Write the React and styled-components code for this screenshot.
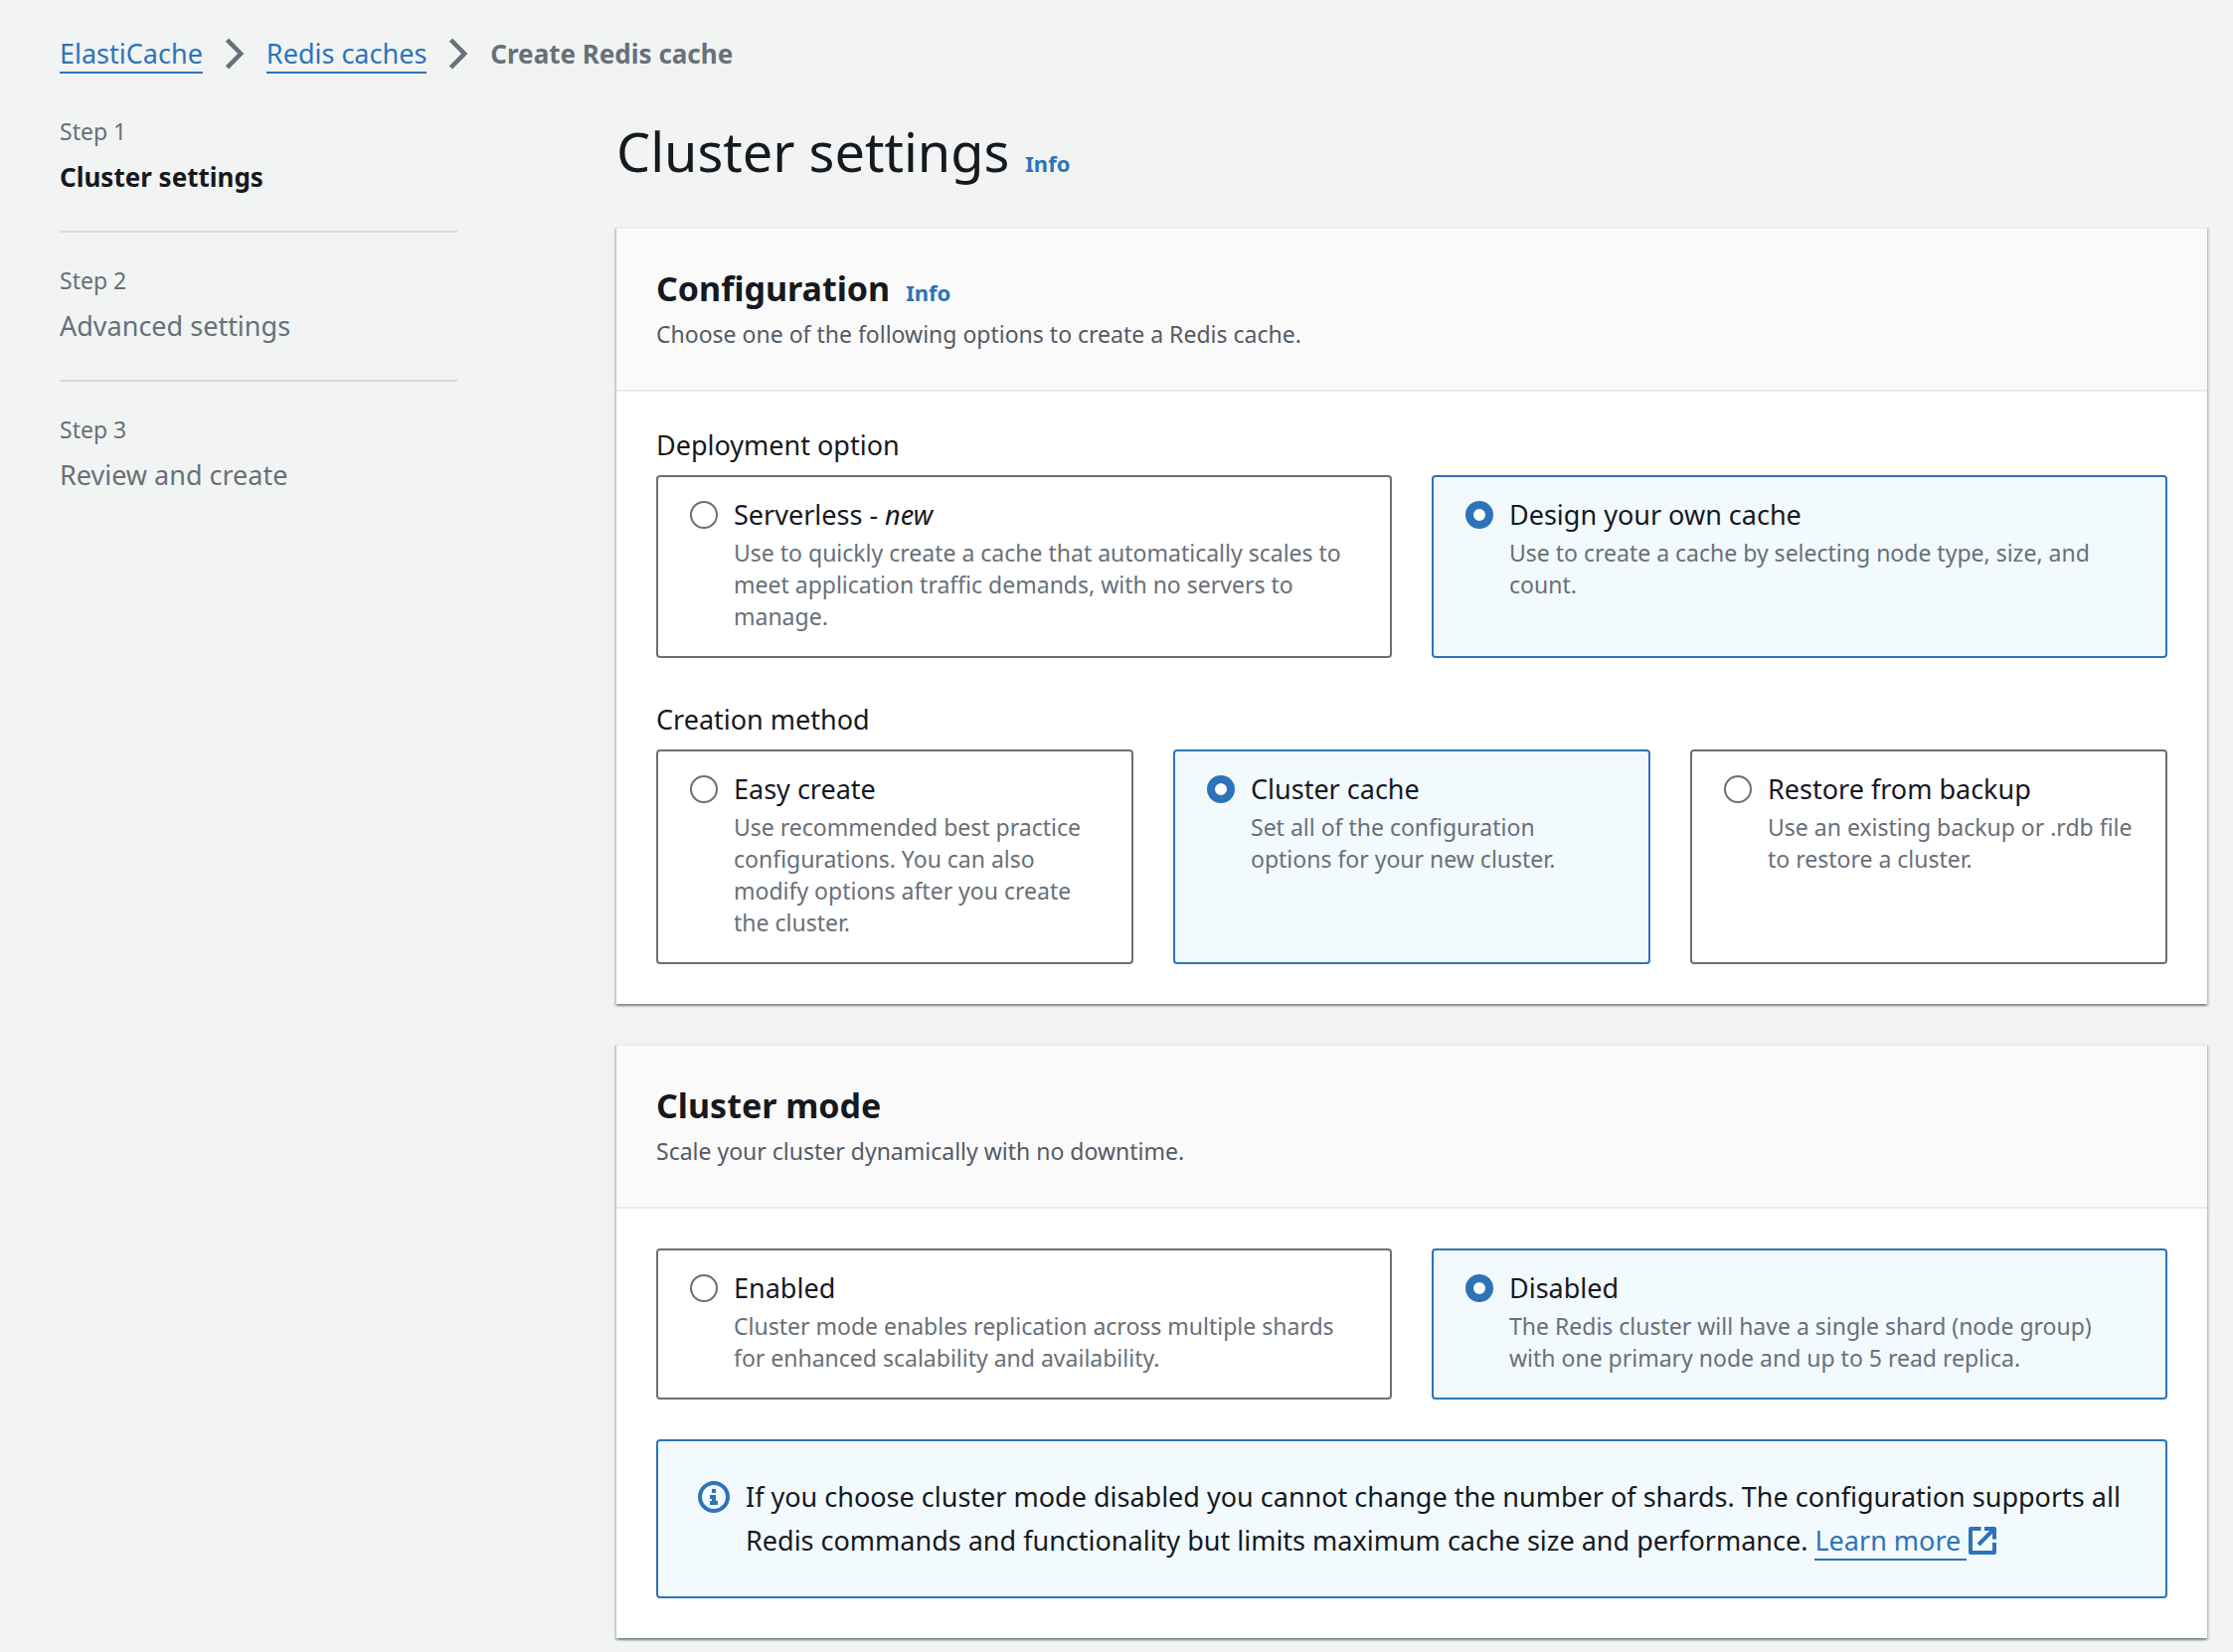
import React, { useState } from 'react';
import styled, { createGlobalStyle, css } from 'styled-components';

const color = {
  page: '#f2f4f3',
  text: '#16191f',
  description: '#545b64',
  muted: '#687078',
  link: '#2e73b8',
  selected: '#f2fafd',
  surface: '#ffffff',
  header: '#fafafa',
  divider: '#d5dbdb',
  line: '#eaeded',
};

const GlobalStyle = createGlobalStyle`
  *, *::before, *::after { box-sizing: border-box; }
  body {
    margin: 0;
    background: ${color.page};
    color: ${color.text};
    font-family: "Noto Sans", "Open Sans", sans-serif;
    font-size: 27px;
    line-height: 44px;
  }
`;

const Page = styled.div`
  display: flex;
  flex-direction: column;
  gap: 40px;
  padding: 32px 26px 14px 60px;
`;

const underlined = css`
  color: ${color.link};
  text-decoration: none;
  border-bottom: 2px solid ${color.link};
`;

const Crumbs = styled.ol`
  display: flex;
  align-items: center;
  gap: 22px;
  margin: 0;
  padding: 0;
  list-style: none;
`;

const Crumb = styled.li`
  display: flex;
  align-items: center;
  gap: 22px;
`;

const CrumbText = styled.span`
  line-height: 44px;
`;

const CrumbLink = styled.a`
  ${underlined}
`;

const CurrentCrumb = styled.strong`
  color: ${color.muted};
  font-size: 26px;
  font-weight: 700;
`;

const Layout = styled.div`
  display: grid;
  grid-template-columns: 400px minmax(0, 1fr);
  column-gap: 160px;
  align-items: start;
`;

const Steps = styled.ol`
  margin: 0;
  padding: 0;
  list-style: none;
`;

const Step = styled.li`
  display: flex;
  flex-direction: column;
  gap: 8px;
  padding-bottom: 32px;

  & + & {
    padding-top: 32px;
    border-top: 2px solid ${color.divider};
  }
`;

const StepNumber = styled.span`
  color: ${color.muted};
  font-size: 23px;
  line-height: 32px;
`;

const StepName = styled.span`
  color: ${p => (p.$current ? color.text : color.muted)};
  font-size: ${p => (p.$current ? 26 : 27)}px;
  font-weight: ${p => (p.$current ? 700 : 400)};
`;

const Main = styled.main`
  display: flex;
  flex-direction: column;
  gap: 40px;
`;

const TitleRow = styled.div`
  display: flex;
  align-items: baseline;
  gap: 16px;
`;

const PageTitle = styled.h1`
  margin: 0;
  font-size: 54px;
  font-weight: 400;
  line-height: 72px;
`;

const InfoLink = styled.a`
  color: ${color.link};
  font-size: 22px;
  font-weight: 700;
  line-height: 32px;
  text-decoration: none;
`;

const Panel = styled.section`
  background: ${color.surface};
  border-top: 2px solid ${color.line};
  box-shadow:
    0 2px 2px 0 rgba(0, 28, 36, 0.3),
    2px 2px 2px 0 rgba(0, 28, 36, 0.15),
    -2px 2px 2px 0 rgba(0, 28, 36, 0.15);
`;

const PanelHeader = styled.header`
  display: flex;
  flex-direction: column;
  gap: 10px;
  padding: 40px;
  background: ${color.header};
  border-bottom: 2px solid ${color.line};
`;

const PanelTitle = styled.h2`
  margin: 0;
  font-size: 34px;
  font-weight: 700;
  line-height: 40px;
`;

const PanelDescription = styled.p`
  margin: 0;
  color: ${color.description};
  font-size: 23px;
  line-height: 32px;
`;

const PanelBody = styled.div`
  display: flex;
  flex-direction: column;
  gap: ${p => p.$gap}px;
  padding: 40px;
`;

const FieldGroup = styled.fieldset`
  min-width: 0;
  margin: 0;
  padding: 0;
  border: 0;
`;

const FieldLabel = styled.legend`
  padding: 0 0 16px;
  line-height: 28px;
`;

const Tiles = styled.div`
  display: grid;
  grid-template-columns: repeat(${p => p.$columns}, minmax(0, 1fr));
  gap: 40px;
`;

const Tile = styled.label`
  display: flex;
  align-items: flex-start;
  gap: 16px;
  padding: 16px 30px 24px 32px;
  border: 2px solid ${p => (p.$selected ? color.link : color.muted)};
  border-radius: 4px;
  background: ${p => (p.$selected ? color.selected : color.surface)};
  cursor: pointer;
`;

const Radio = styled.input`
  appearance: none;
  flex: none;
  width: 28px;
  height: 28px;
  margin: 8px 0 0;
  border: 2px solid ${color.muted};
  border-radius: 50%;
  background: ${color.surface};

  &:checked {
    border: 8px solid ${color.link};
  }
`;

const TileText = styled.span`
  display: flex;
  flex-direction: column;
  min-width: 0;
`;

const TileName = styled.span``;

const TileDescription = styled.span`
  color: ${color.muted};
  font-size: 23px;
  line-height: 32px;
`;

const Alert = styled.div`
  display: flex;
  align-items: flex-start;
  gap: 16px;
  padding: 34px 40px;
  border: 2px solid ${color.link};
  border-radius: 4px;
  background: ${color.selected};
`;

const AlertIcon = styled.svg`
  flex: none;
  width: 32px;
  height: 32px;
  margin-top: 6px;
  color: ${color.link};
`;

const AlertText = styled.p`
  margin: 0;
`;

const ExternalLink = styled.a`
  ${underlined}
  padding-right: 6px;
`;

const ExternalGlyph = styled.svg`
  width: 28px;
  height: 28px;
  margin-left: 2px;
  color: ${color.link};
  vertical-align: -4px;
`;

function Chevron() {
  return (
    <svg width="20" height="32" viewBox="0 0 20 32" aria-hidden="true">
      <path d="M2.5 2.2 16.2 16 2.5 29.8" fill="none" stroke={color.muted} strokeWidth="4.5" />
    </svg>
  );
}

function InfoIcon() {
  return (
    <AlertIcon viewBox="0 0 32 32" aria-hidden="true">
      <circle cx="16" cy="16" r="14" fill="none" stroke="currentColor" strokeWidth="4" />
      <path d="M14 8h4v4h-4zM12 14h6v6h2v4h-8v-4h2v-2h-2z" fill="currentColor" />
    </AlertIcon>
  );
}

function ExternalIcon() {
  return (
    <ExternalGlyph viewBox="0 0 28 28" aria-hidden="true">
      <path
        d="M12.5 2H2v24h24V16M16 2h10v10.5M25.5 2.5 10 18"
        fill="none"
        stroke="currentColor"
        strokeWidth="4"
        strokeLinejoin="round"
      />
    </ExternalGlyph>
  );
}

function TileGroup({ name, label, hint, initial, options }) {
  const [value, setValue] = useState(initial);
  return (
    <FieldGroup aria-label={hint}>
      {label && <FieldLabel>{label}</FieldLabel>}
      <Tiles $columns={options.length}>
        {options.map(option => (
          <Tile key={option.id} htmlFor={option.id} $selected={value === option.id}>
            <Radio
              type="radio"
              id={option.id}
              name={name}
              checked={value === option.id}
              onChange={() => setValue(option.id)}
            />
            <TileText>
              <TileName>{option.title}</TileName>
              <TileDescription>{option.description}</TileDescription>
            </TileText>
          </Tile>
        ))}
      </Tiles>
    </FieldGroup>
  );
}

const steps = ['Cluster settings', 'Advanced settings', 'Review and create'];

const deploymentOptions = [
  {
    id: 'serverless',
    title: <>Serverless - <em>new</em></>,
    description:
      'Use to quickly create a cache that automatically scales to meet application traffic demands, with no servers to manage.',
  },
  {
    id: 'own-cache',
    title: 'Design your own cache',
    description: 'Use to create a cache by selecting node type, size, and count.',
  },
];

const creationMethods = [
  {
    id: 'easy-create',
    title: 'Easy create',
    description:
      'Use recommended best practice configurations. You can also modify options after you create the cluster.',
  },
  {
    id: 'cluster-cache',
    title: 'Cluster cache',
    description: 'Set all of the configuration options for your new cluster.',
  },
  {
    id: 'restore-backup',
    title: 'Restore from backup',
    description: 'Use an existing backup or .rdb file to restore a cluster.',
  },
];

const clusterModes = [
  {
    id: 'mode-enabled',
    title: 'Enabled',
    description:
      'Cluster mode enables replication across multiple shards for enhanced scalability and availability.',
  },
  {
    id: 'mode-disabled',
    title: 'Disabled',
    description:
      'The Redis cluster will have a single shard (node group) with one primary node and up to 5 read replica.',
  },
];

export default function App() {
  return (
    <>
      <GlobalStyle />
      <Page>
        <nav aria-label="Breadcrumbs">
          <Crumbs>
            <Crumb>
              <CrumbText><CrumbLink href="#elasticache">ElastiCache</CrumbLink></CrumbText>
              <Chevron />
            </Crumb>
            <Crumb>
              <CrumbText><CrumbLink href="#redis">Redis caches</CrumbLink></CrumbText>
              <Chevron />
            </Crumb>
            <Crumb>
              <CurrentCrumb aria-current="page">Create Redis cache</CurrentCrumb>
            </Crumb>
          </Crumbs>
        </nav>

        <Layout>
          <nav aria-label="Steps">
            <Steps>
              {steps.map((step, index) => (
                <Step key={step}>
                  <StepNumber>Step {index + 1}</StepNumber>
                  <StepName $current={index === 0}>{step}</StepName>
                </Step>
              ))}
            </Steps>
          </nav>

          <Main>
            <TitleRow>
              <PageTitle>Cluster settings</PageTitle>
              <InfoLink href="#cluster-info">Info</InfoLink>
            </TitleRow>

            <Panel>
              <PanelHeader>
                <TitleRow>
                  <PanelTitle>Configuration</PanelTitle>
                  <InfoLink href="#configuration-info">Info</InfoLink>
                </TitleRow>
                <PanelDescription>
                  Choose one of the following options to create a Redis cache.
                </PanelDescription>
              </PanelHeader>
              <PanelBody $gap={48}>
                <TileGroup
                  name="deployment"
                  label="Deployment option"
                  initial="own-cache"
                  options={deploymentOptions}
                />
                <TileGroup
                  name="method"
                  label="Creation method"
                  initial="cluster-cache"
                  options={creationMethods}
                />
              </PanelBody>
            </Panel>

            <Panel>
              <PanelHeader>
                <PanelTitle>Cluster mode</PanelTitle>
                <PanelDescription>
                  Scale your cluster dynamically with no downtime.
                </PanelDescription>
              </PanelHeader>
              <PanelBody $gap={40}>
                <TileGroup
                  name="mode"
                  hint="Cluster mode"
                  initial="mode-disabled"
                  options={clusterModes}
                />
                <Alert>
                  <InfoIcon />
                  <AlertText>
                    If you choose cluster mode disabled you cannot change the number of shards. The
                    configuration supports all Redis commands and functionality but limits maximum
                    cache size and performance. <ExternalLink href="#learn-more">Learn more</ExternalLink>
                    <ExternalIcon />
                  </AlertText>
                </Alert>
              </PanelBody>
            </Panel>
          </Main>
        </Layout>
      </Page>
    </>
  );
}
